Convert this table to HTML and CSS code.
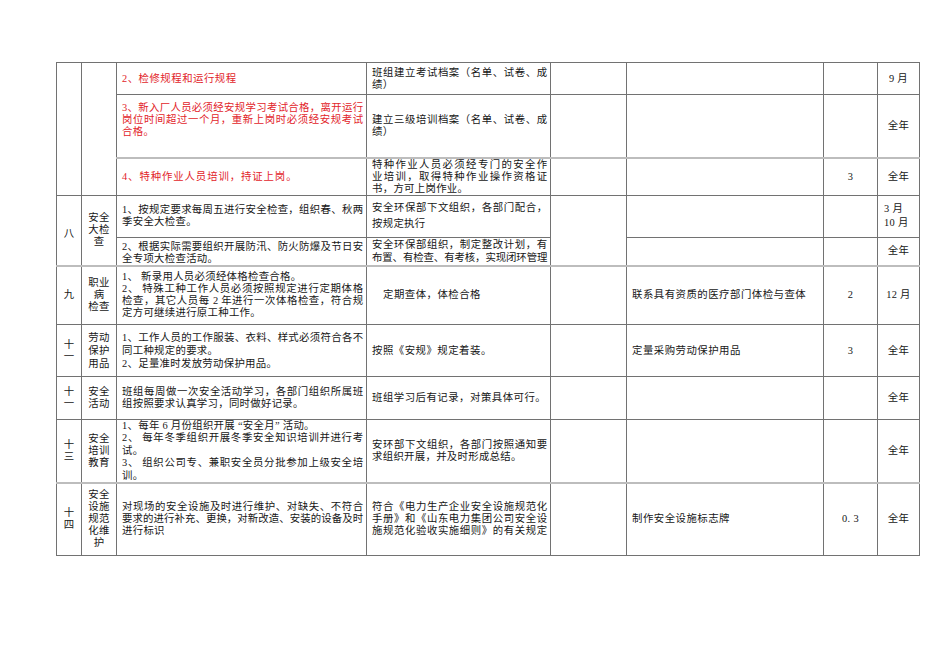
FILE: index.html
```html
<!DOCTYPE html>
<html lang="zh-CN">
<head>
<meta charset="utf-8">
<title>安全工作计划</title>
<link rel="stylesheet" href="styles.css">
</head>
<body>
<div class="page">
<table class="plan">
  <colgroup>
    <col class="c1"><col class="c2"><col class="c3"><col class="c4"><col class="c5"><col class="c6"><col class="c7"><col class="c8">
  </colgroup>
  <tr class="h32">
    <td rowspan="3"></td>
    <td rowspan="3"></td>
    <td class="red sp"><span class="l">2、检修规程和运行规程</span></td>
    <td><span class="l j">班组建立考试档案（名单、试卷、成</span><span class="l">绩）</span></td>
    <td></td><td></td><td></td>
    <td class="c">9 月</td>
  </tr>
  <tr class="h63">
    <td class="red pb12"><span class="l j">3、新入厂人员必须经安规学习考试合格，离开运行</span><span class="l j">岗位时间超过一个月，重新上岗时必须经安规考试</span><span class="l">合格。</span></td>
    <td><span class="l j">建立三级培训档案（名单、试卷、成</span><span class="l">绩）</span></td>
    <td></td><td></td><td></td>
    <td class="c">全年</td>
  </tr>
  <tr class="h36 dbl">
    <td class="red sp2"><span class="l">4、特种作业人员培训，持证上岗。</span></td>
    <td><span class="l j">特种作业人员必须经专门的安全作</span><span class="l j">业培训，取得特种作业操作资格证</span><span class="l">书，方可上岗作业。</span></td>
    <td></td><td></td>
    <td class="c">3</td>
    <td class="c">全年</td>
  </tr>
  <tr class="h42">
    <td rowspan="2" class="c pt8">八</td>
    <td rowspan="2" class="c">安全<br>大检<br>查</td>
    <td><span class="l j">1、按规定要求每周五进行安全检查，组织春、秋两</span><span class="l">季安全大检查。</span></td>
    <td class="lh16"><span class="l j">安全环保部下文组织，各部门配合，</span><span class="l">按规定执行</span></td>
    <td rowspan="2"></td>
    <td></td><td></td>
    <td class="lh14 left">3 月<br>10 月</td>
  </tr>
  <tr class="h27">
    <td class="pt3"><span class="l j">2、根据实际需要组织开展防汛、防火防爆及节日安</span><span class="l">全专项大检查活动。</span></td>
    <td class="lh13"><span class="l j">安全环保部组织，制定整改计划，有</span><span class="l j tight">布置、有检查、有考核，实现闭环管理</span></td>
    <td></td><td></td>
    <td class="c">全年</td>
  </tr>
  <tr class="h59 dbl">
    <td class="c">九</td>
    <td class="c">职业<br>病<br>检查</td>
    <td><span class="l">1、 新录用人员必须经体格检查合格。</span><span class="l j">2、 特殊工种工作人员必须按照规定进行定期体格</span><span class="l j">检查，其它人员每 2 年进行一次体格检查，符合规</span><span class="l">定方可继续进行原工种工作。</span></td>
    <td class="ind sp">定期查体，体检合格</td>
    <td></td>
    <td class="sp">联系具有资质的医疗部门体检与查体</td>
    <td class="c">2</td>
    <td class="c">12 月</td>
  </tr>
  <tr class="h52">
    <td class="c">十<br>一</td>
    <td class="c lh13">劳动<br>保护<br>用品</td>
    <td class="lh13"><span class="l j">1、工作人员的工作服装、衣料、样式必须符合各不</span><span class="l">同工种规定的要求。</span><span class="l">2、足量准时发放劳动保护用品。</span></td>
    <td class="sp">按照《安规》规定着装。</td>
    <td></td>
    <td class="sp">定量采购劳动保护用品</td>
    <td class="c">3</td>
    <td class="c">全年</td>
  </tr>
  <tr class="h43">
    <td class="c">十<br>一</td>
    <td class="c">安全<br>活动</td>
    <td><span class="l j">班组每周做一次安全活动学习，各部门组织所属班</span><span class="l">组按照要求认真学习，同时做好记录。</span></td>
    <td class="sp">班组学习后有记录，对策具体可行。</td>
    <td></td><td></td><td></td>
    <td class="c">全年</td>
  </tr>
  <tr class="h63">
    <td class="c">十<br>三</td>
    <td class="c">安全<br>培训<br>教育</td>
    <td class="lh125"><span class="l">1、每年 6 月份组织开展 “安全月” 活动。</span><span class="l j">2、 每年冬季组织开展冬季安全知识培训并进行考</span><span class="l">试。</span><span class="l j">3、 组织公司专、兼职安全员分批参加上级安全培</span><span class="l">训。</span></td>
    <td><span class="l j">安环部下文组织，各部门按照通知要</span><span class="l">求组织开展，并及时形成总结。</span></td>
    <td></td><td></td><td></td>
    <td class="c">全年</td>
  </tr>
  <tr class="h72 dbl">
    <td class="c">十<br>四</td>
    <td class="c">安全<br>设施<br>规范<br>化维<br>护</td>
    <td><span class="l j">对现场的安全设施及时进行维护、对缺失、不符合</span><span class="l j">要求的进行补充、更换，对新改造、安装的设备及时</span><span class="l">进行标识</span></td>
    <td><span class="l j">符合《电力生产企业安全设施规范化</span><span class="l j">手册》和《山东电力集团公司安全设</span><span class="l j">施规范化验收实施细则》的有关规定</span></td>
    <td></td>
    <td class="sp">制作安全设施标志牌</td>
    <td class="c">0. 3</td>
    <td class="c">全年</td>
  </tr>
</table>
</div>
</body>
</html>
```

FILE: styles.css
```css
html, body {
  margin: 0;
  background: #ffffff;
}

body {
  font-family: "Liberation Serif", "Noto Sans CJK SC", serif;
  font-size: 10.4px;
  color: #161616;
}

.page {
  padding: 62px 0 0 56px;
}

.plan {
  border-collapse: collapse;
  table-layout: fixed;
  width: 863px;
}

.c1 { width: 25px; }
.c2 { width: 35px; }
.c3 { width: 250px; }
.c4 { width: 184px; }
.c5 { width: 76px; }
.c6 { width: 197px; }
.c7 { width: 54px; }
.c8 { width: 42px; }

.plan td {
  border: 1px solid #727272;
  padding: 0 3px 0 5px;
  vertical-align: middle;
  line-height: 12px;
  letter-spacing: 0.3px;
  overflow: hidden;
}

.plan .dbl td {
  border-top: 2px solid #bdbdbd;
}

.h32 { height: 32px; }
.h63 { height: 63px; }
.h36 { height: 36px; }
.h42 { height: 42px; }
.h27 { height: 27px; }
.h59 { height: 59px; }
.h52 { height: 52px; }
.h43 { height: 43px; }
.h72 { height: 72px; }

.plan td.c {
  text-align: center;
  padding: 0;
}

.plan td.left {
  padding-left: 6px;
}

.l {
  display: block;
}

.j {
  text-align: justify;
  text-align-last: justify;
  letter-spacing: -0.1px;
}

.j.tight {
  letter-spacing: -0.35px;
}

.red {
  color: #e2242a;
}

.plan td.sp {
  letter-spacing: 0.5px;
}

.plan td.sp2 {
  letter-spacing: 0.9px;
}

.plan td.pb12 {
  padding-bottom: 12px;
}

.plan td.pt3 {
  padding-top: 3px;
}

.plan td.pt8 {
  padding-top: 8px;
}

.plan td.ind {
  padding-left: 16px;
}

.plan td.lh16 { line-height: 16px; }
.plan td.lh14 { line-height: 14px; }
.plan td.lh13 { line-height: 13px; }
.plan td.lh125 { line-height: 12.4px; }
```
